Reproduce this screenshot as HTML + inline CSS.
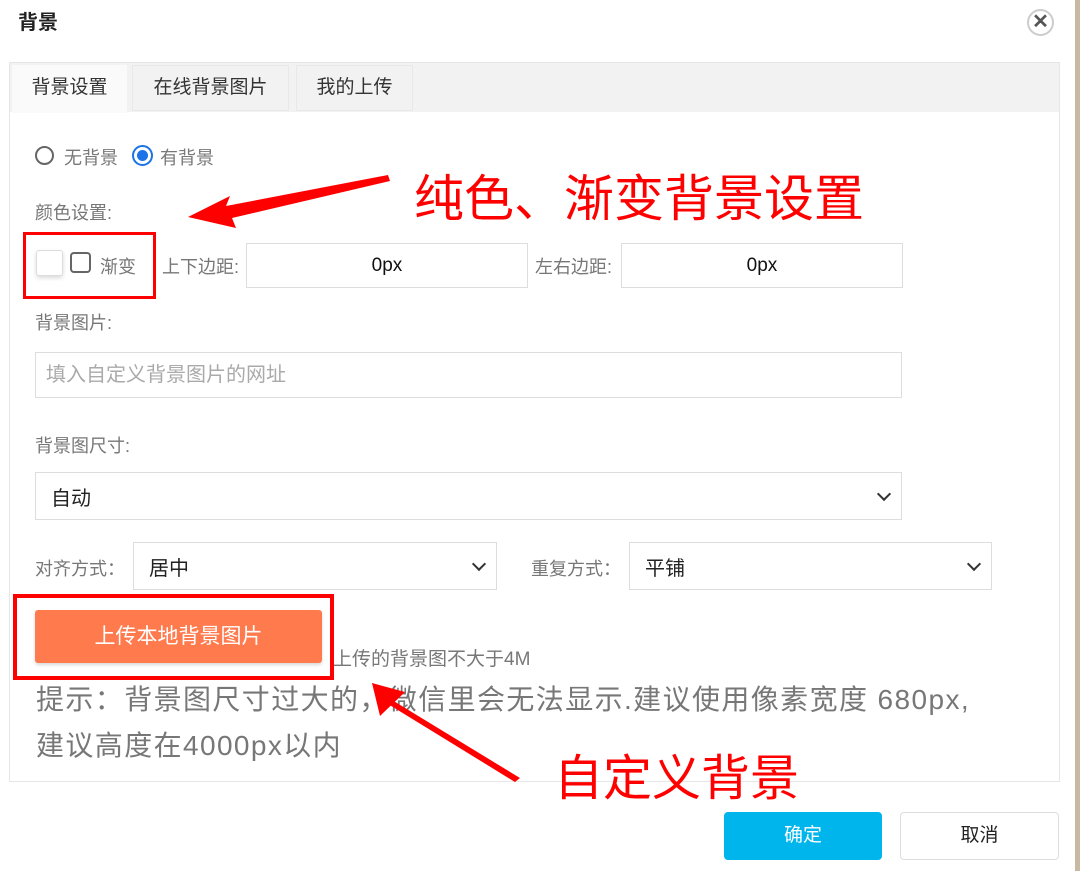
<!DOCTYPE html>
<html><head><meta charset="utf-8"><style>
*{margin:0;padding:0;box-sizing:border-box}
body{width:1080px;height:871px;background:#fff;position:relative;overflow:hidden;font-family:"Liberation Sans","Noto Sans CJK SC",sans-serif;color:#333}
.a{position:absolute}
.lbl{position:absolute;font-size:18px;color:#777}
.inp{position:absolute;border:1px solid #ddd;background:#fff;font-size:19px}
.sel{position:absolute;border:1px solid #ddd;background:#fff;font-size:20px;color:#222;padding-left:15px;display:flex;align-items:center}
.chev{position:absolute;right:12px;top:50%;width:10px;height:10px;border-right:2px solid #333;border-bottom:2px solid #333;transform:translateY(-70%) rotate(45deg)}
</style></head><body>
<div class="a" style="left:1075px;top:0;width:5px;height:871px;background:#c9b9a0"></div>
<div class="a" style="left:18px;top:6px;font-size:20px;font-weight:bold;color:#222">背景</div>
<div class="a" style="left:1027px;top:9px;width:27px;height:27px;border:2px solid #ccc;border-radius:50%;text-align:center;line-height:22px;font-size:20px;font-weight:bold;color:#555">✕</div>
<div class="a" style="left:9px;top:62px;width:1051px;height:720px;border:1px solid #e6e6e6"></div>
<div class="a" style="left:10px;top:63px;width:1049px;height:49px;background:#f2f2f2"></div>
<div class="a" style="left:12px;top:65px;width:115px;height:48px;background:#fafafa;font-size:19px;line-height:46px;text-align:center">背景设置</div>
<div class="a" style="left:132px;top:65px;width:157px;height:46px;border:1px solid #e8e8e8;font-size:19px;line-height:44px;text-align:center">在线背景图片</div>
<div class="a" style="left:296px;top:65px;width:117px;height:46px;border:1px solid #e8e8e8;font-size:19px;line-height:44px;text-align:center">我的上传</div>
<div class="a" style="left:35px;top:146px;width:19px;height:19px;border:2px solid #666;border-radius:50%"></div>
<div class="lbl" style="left:64px;top:144px">无背景</div>
<div class="a" style="left:132px;top:145px;width:21px;height:21px;border:2px solid #1a73e8;border-radius:50%"><div style="margin:3px;width:11px;height:11px;border-radius:50%;background:#1a73e8"></div></div>
<div class="lbl" style="left:160px;top:144px">有背景</div>
<div class="lbl" style="left:35px;top:199px">颜色设置:</div>
<div class="a" style="left:36px;top:250px;width:27px;height:26px;border:1px solid #ddd;border-radius:3px;box-shadow:0 2px 4px rgba(0,0,0,.15)"></div>
<div class="a" style="left:70px;top:252px;width:21px;height:21px;border:2px solid #666;border-radius:4px"></div>
<div class="lbl" style="left:100px;top:253px">渐变</div>
<div class="lbl" style="left:162px;top:253px">上下边距:</div>
<div class="inp" style="left:246px;top:243px;width:282px;height:45px;text-align:center;line-height:43px;color:#111">0px</div>
<div class="lbl" style="left:535px;top:253px">左右边距:</div>
<div class="inp" style="left:621px;top:243px;width:282px;height:45px;text-align:center;line-height:43px;color:#111">0px</div>
<div class="a" style="left:23px;top:232px;width:133px;height:67px;border:3px solid #f00"></div>
<div class="lbl" style="left:35px;top:309px">背景图片:</div>
<div class="inp" style="left:35px;top:352px;width:867px;height:46px;line-height:44px;padding-left:10px;color:#aaa;font-size:20px">填入自定义背景图片的网址</div>
<div class="lbl" style="left:35px;top:432px">背景图尺寸:</div>
<div class="sel" style="left:35px;top:472px;width:867px;height:48px">自动<div class="chev"></div></div>
<div class="lbl" style="left:35px;top:555px">对齐方式：</div>
<div class="sel" style="left:133px;top:542px;width:364px;height:48px">居中<div class="chev"></div></div>
<div class="lbl" style="left:531px;top:555px">重复方式：</div>
<div class="sel" style="left:629px;top:542px;width:363px;height:48px">平铺<div class="chev"></div></div>
<div class="a" style="left:35px;top:610px;width:287px;height:53px;background:#ff7a4d;border-radius:3px;color:#fff;font-size:21px;line-height:53px;text-align:center;box-shadow:0 2px 3px rgba(0,0,0,.15)">上传本地背景图片</div>
<div class="a" style="left:13px;top:594px;width:321px;height:86px;border:4px solid #f00"></div>
<div class="lbl" style="left:333px;top:644px;font-size:19px">上传的背景图不大于4M</div>
<div class="a" style="left:36px;top:677px;font-size:28px;letter-spacing:1.4px;color:#777;line-height:46px;width:1030px;white-space:nowrap">提示：背景图尺寸过大的，微信里会无法显示.建议使用像素宽度 680px,<br>建议高度在4000px以内</div>
<svg class="a" style="left:0;top:0" width="1080" height="871">
<polygon points="388,175 226,206 230,196 188,217 236,228 232,218 390,181" fill="#f00"/>
<polygon points="520,778 392,700 398,694 372,683 386,710 388,704 515,782" fill="#f00"/>
<polygon points="372,683 380,716 405,692" fill="#f00"/>
</svg>
<div class="a" style="left:414px;top:163px;font-size:50px;color:#f00;font-family:'Noto Sans CJK SC',sans-serif;line-height:64px">纯色、渐变背景设置</div>
<div class="a" style="left:554px;top:743px;font-size:49px;color:#f00;font-family:'Noto Sans CJK SC',sans-serif;line-height:64px">自定义背景</div>
<div class="a" style="left:724px;top:812px;width:158px;height:48px;background:#00b4ec;border-radius:4px;color:#fff;font-size:19px;line-height:48px;text-align:center">确定</div>
<div class="a" style="left:900px;top:812px;width:159px;height:48px;border:1px solid #ddd;border-radius:4px;color:#222;font-size:19px;line-height:46px;text-align:center">取消</div>
</body></html>
